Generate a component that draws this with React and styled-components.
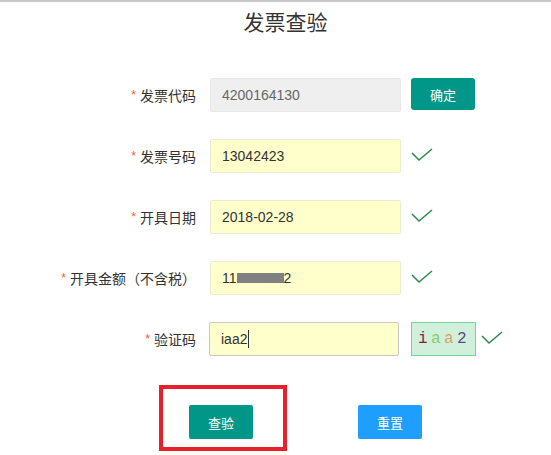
import styled, { createGlobalStyle } from "styled-components";

const GlobalStyle = createGlobalStyle`
  html, body {
    margin: 0;
    padding: 0;
    background: #fff;
  }
  body {
    font-family: "Liberation Sans", "Noto Sans CJK SC", sans-serif;
    color: #333;
  }
`;

const ROWS = [
  { key: "code", label: "发票代码", value: "4200164130", disabled: true, extra: "confirm" },
  { key: "no", label: "发票号码", value: "13042423", extra: "check" },
  { key: "date", label: "开具日期", value: "2018-02-28", extra: "check" },
  { key: "amount", label: "开具金额（不含税）", value: "amount", extra: "check" },
];

const CAPTCHA = [
  { ch: "i", color: "#8a1c3c" },
  { ch: "a", color: "#7fcf66" },
  { ch: "a", color: "#d8a262" },
  { ch: "2", color: "#5b4a86" },
];

function Check() {
  return (
    <CheckIcon viewBox="0 0 22 14" width="22" height="14">
      <polyline points="1,5 8,12 21,1" fill="none" stroke="#2b8a4e" strokeWidth="1.5" />
    </CheckIcon>
  );
}

export default function App() {
  return (
    <Page>
      <GlobalStyle />
      <Title>发票查验</Title>
      <Form>
        {ROWS.map((r) => (
          <Row key={r.key}>
            <Label>
              <Star>*</Star>
              {r.label}
            </Label>
            <Field $disabled={r.disabled}>
              {r.value === "amount" ? (
                <>
                  11<Redact />2
                </>
              ) : (
                r.value
              )}
            </Field>
            {r.extra === "confirm" ? <SmallButton>确定</SmallButton> : <Check />}
          </Row>
        ))}
        <Row>
          <Label>
            <Star>*</Star>
            验证码
          </Label>
          <Field $focused>
            iaa2
            <Caret />
          </Field>
          <Extra>
            <Captcha>
              {CAPTCHA.map((c, i) => (
                <span key={i} style={{ color: c.color }}>
                  {c.ch}
                </span>
              ))}
            </Captcha>
            <Check />
          </Extra>
        </Row>
      </Form>
      <Actions>
        <Highlight>
          <Button $color="#009688">查验</Button>
        </Highlight>
        <Button $color="#1e9fff" $offset>
          重置
        </Button>
      </Actions>
    </Page>
  );
}

const Page = styled.div`
  width: 551px;
  height: 455px;
  box-sizing: border-box;
  border-top: 2px solid #c8c8c8;
  overflow: hidden;
`;

const Title = styled.h1`
  margin: 6px 0 0 0;
  text-align: center;
  font-size: 21px;
  font-weight: 400;
  line-height: 30px;
  color: #333;
  padding-left: 20px;
`;

const Form = styled.div`
  margin-top: 40px;
  display: flex;
  flex-direction: column;
  gap: 27px;
`;

const Row = styled.div`
  display: grid;
  grid-template-columns: 196px 191px auto;
  column-gap: 14px;
  align-items: center;
  height: 34px;
  & > :last-child {
    margin-left: -4px;
  }
`;

const Label = styled.div`
  text-align: right;
  font-size: 14px;
  color: #333;
  white-space: nowrap;
`;

const Star = styled.span`
  color: #ff5722;
  font-size: 12px;
  margin-right: 4px;
  position: relative;
  top: -2px;
`;

const Field = styled.div`
  box-sizing: border-box;
  height: 34px;
  display: flex;
  align-items: center;
  padding: 0 11px;
  font-size: 14px;
  border-radius: 2px;
  border: 1px solid ${(p) => (p.$focused ? "#c9c9c9" : p.$disabled ? "#e8e8e8" : "#ececd0")};
  background: ${(p) => (p.$disabled ? "#efefef" : "#ffffcc")};
  color: ${(p) => (p.$disabled ? "#666" : "#333")};
  ${(p) => p.$focused && "margin-left: -1px; width: 190px;"}
`;

const Redact = styled.span`
  display: inline-block;
  width: 47px;
  height: 10px;
  background: #808080;
`;

const Caret = styled.span`
  display: inline-block;
  width: 1px;
  height: 18px;
  background: #333;
  margin-left: 1px;
`;

const CheckIcon = styled.svg`
  display: block;
  margin-top: -3px;
`;

const SmallButton = styled.div`
  width: 64px;
  height: 32px;
  display: flex;
  align-items: center;
  justify-content: center;
  background: #009688;
  color: #fff;
  font-size: 13px;
  border-radius: 3px;
  margin-top: -2px;
`;

const Extra = styled.div`
  display: flex;
  align-items: center;
  gap: 5px;
`;

const Captcha = styled.div`
  box-sizing: border-box;
  width: 65px;
  height: 34px;
  display: flex;
  align-items: center;
  padding-left: 6px;
  background: #d0f0dc;
  border: 1px solid #72d39f;
  font-family: "Liberation Mono", "DejaVu Sans Mono", monospace;
  font-size: 16px;
  letter-spacing: 3.4px;
`;

const Actions = styled.div`
  margin-top: 29px;
  display: flex;
  align-items: flex-start;
  padding-left: 159px;
  gap: 71px;
`;

const Highlight = styled.div`
  box-sizing: border-box;
  width: 128px;
  height: 66px;
  border: 4px solid #e8202a;
  padding: 16px 0 0 26px;
`;

const Button = styled.div`
  width: 64px;
  height: 34px;
  display: flex;
  align-items: center;
  justify-content: center;
  background: ${(p) => p.$color};
  color: #fff;
  font-size: 13px;
  border-radius: 2px;
  margin-top: ${(p) => (p.$offset ? "20px" : "0")};
`;
